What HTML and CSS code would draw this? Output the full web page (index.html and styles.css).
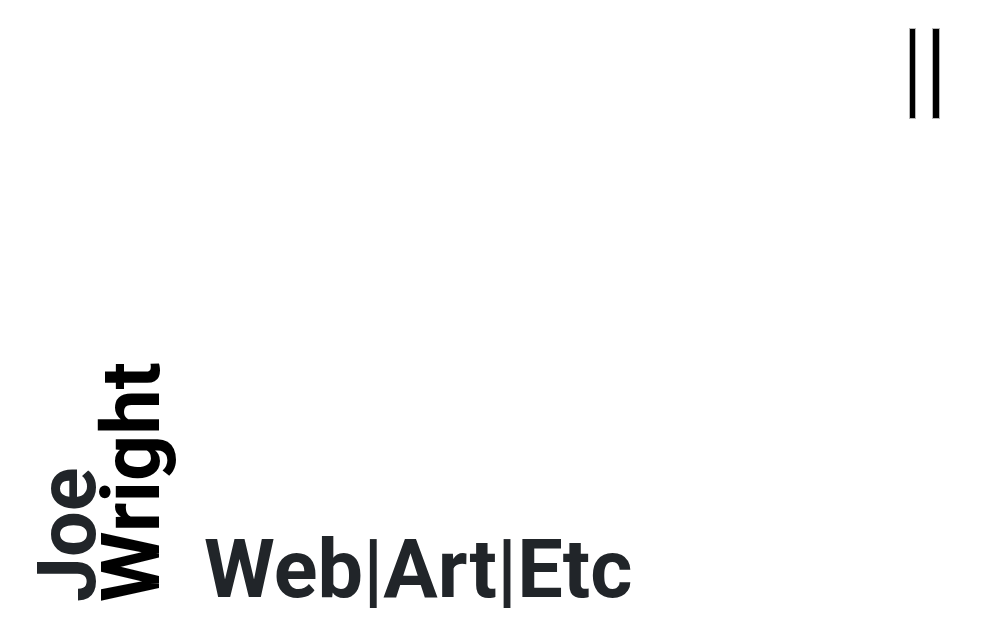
FILE: index.html
```html
<!DOCTYPE html>
<html lang="en">
<head>
<meta charset="utf-8">
<title>Joe Wright</title>
<link rel="stylesheet" href="styles.css">
</head>
<body>
<div class="page">
  <header class="topbar">
    <button class="menu" aria-label="Menu">
      <span class="bar bar-left"></span>
      <span class="bar bar-right"></span>
    </button>
  </header>
  <main class="hero">
    <h1 class="name"><span class="first">Joe</span><br><span class="last">Wright</span></h1>
    <p class="tagline">Web|Art|Etc</p>
  </main>
</div>
</body>
</html>
```

FILE: styles.css
```css
html, body {
  margin: 0;
  padding: 0;
  background: #fff;
}
.page {
  height: 643px;
  display: flex;
  flex-direction: column;
  justify-content: space-between;
  font-family: Roboto, "Liberation Sans", sans-serif;
  color: #212529;
}
.topbar {
  display: flex;
  justify-content: flex-end;
  padding: 28px 60px 0 0;
}
.menu {
  display: flex;
  gap: 16px;
  background: none;
  border: 0;
  padding: 0;
  margin: 0;
}
.bar {
  display: block;
  height: 89px;
  background: #000;
  border: 1px solid #b8b8b8;
}
.bar-left { width: 5px; }
.bar-right { width: 6px; }
.hero {
  display: flex;
  align-items: flex-end;
  padding: 0 0 33px 36px;
}
.name {
  margin: 0 0 8px 0;
  writing-mode: vertical-rl;
  transform: rotate(180deg);
  font-size: 81px;
  font-weight: 700;
  line-height: 64px;
}
.first { color: #212529; }
.last { color: #000; }
.tagline {
  margin: 0 0 0 40px;
  font-size: 81px;
  font-weight: 700;
  line-height: 1;
  color: #212529;
}
```
